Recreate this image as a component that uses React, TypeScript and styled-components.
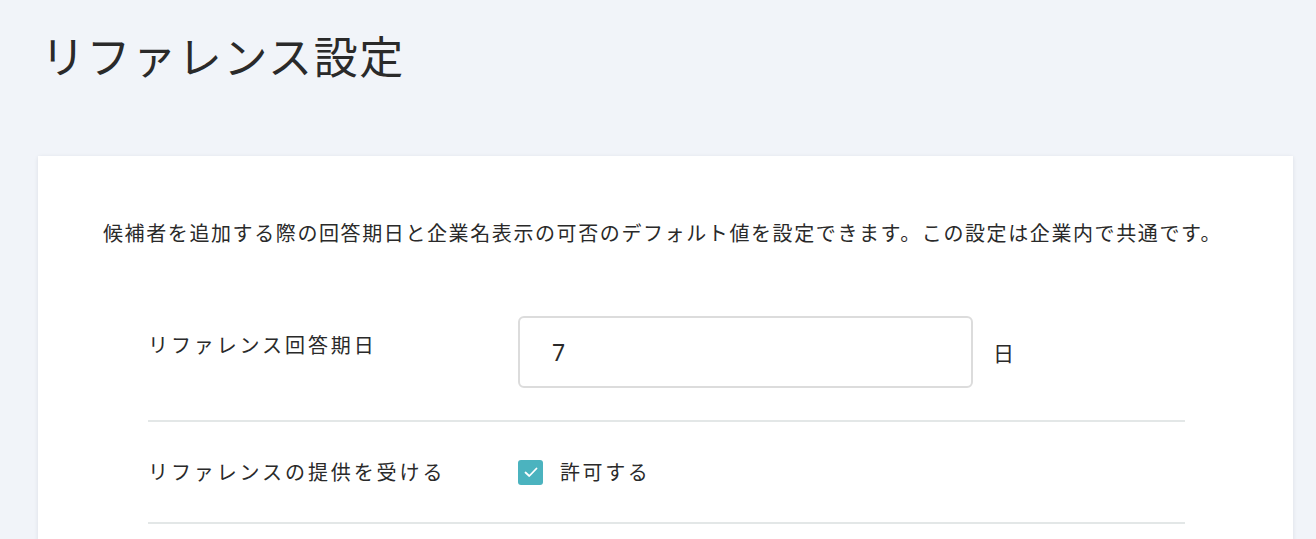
import React from 'react';
import styled, { createGlobalStyle } from 'styled-components';

const GlobalStyle = createGlobalStyle`
  html, body {
    margin: 0;
    padding: 0;
    background: #f1f4f9;
    font-family: "Noto Sans CJK JP", "Noto Sans", sans-serif;
    color: #2a2a2a;
  }
`;

export const Page = styled.div`
  min-height: 539px;
  padding: 24px 23px 0 38px;
  box-sizing: border-box;
`;

export const Title = styled.h1`
  margin: 0 0 70px 0;
  padding-left: 3px;
  font-size: 44px;
  line-height: 62px;
  font-weight: 400;
  letter-spacing: 1.6px;
  color: #2a2a2a;
`;

export const Card = styled.section`
  background: #ffffff;
  box-shadow: 0 1px 4px rgba(30, 40, 60, 0.1);
  padding: 62px 108px 40px 65px;
  min-height: 400px;
  box-sizing: border-box;
`;

export const Description = styled.p`
  margin: 0;
  font-size: 20px;
  line-height: 30px;
  letter-spacing: 1.6px;
  white-space: nowrap;
  color: #2a2a2a;
`;

export const Rows = styled.div`
  margin: 36px 0 0 45px;
`;

export const Row = styled.div<{ $center?: boolean }>`
  display: grid;
  grid-template-columns: 370px 1fr;
  align-items: ${(p) => (p.$center ? 'center' : 'start')};
  padding: 32px 0;
  border-bottom: 2px solid #e3e7e7;
`;

export const Label = styled.div<{ $offset?: number }>`
  padding-top: ${(p) => p.$offset ?? 0}px;
  font-size: 20px;
  line-height: 30px;
  letter-spacing: 2.9px;
  color: #2a2a2a;
`;

export const Field = styled.div`
  display: flex;
  align-items: center;
  gap: 20px;
  min-height: 36px;
`;

export const NumberInput = styled.input`
  width: 455px;
  height: 72px;
  box-sizing: border-box;
  border: 2px solid #dcdcdc;
  border-radius: 6px;
  padding: 0 0 0 32px;
  font-family: "Noto Sans", "Noto Sans CJK JP", sans-serif;
  font-size: 23px;
  color: #2a2a2a;
  outline: none;
  background: #ffffff;
`;

export const Unit = styled.span`
  font-size: 21px;
  color: #2a2a2a;
`;

export const CheckLabel = styled.label`
  display: flex;
  align-items: center;
  gap: 17px;
  font-size: 20px;
  line-height: 30px;
  letter-spacing: 2.6px;
  color: #2a2a2a;
  cursor: pointer;
`;

export const CheckBox = styled.span`
  width: 25px;
  height: 25px;
  flex: none;
  border-radius: 3px;
  background: #4bb3bf;
  display: inline-flex;
  align-items: center;
  justify-content: center;
`;

export default function App() {
  return (
    <>
      <GlobalStyle />
      <Page>
        <Title>リファレンス設定</Title>
        <Card>
          <Description>
            候補者を追加する際の回答期日と企業名表示の可否のデフォルト値を設定できます。この設定は企業内で共通です。
          </Description>
          <Rows>
            <Row>
              <Label $offset={14}>リファレンス回答期日</Label>
              <Field>
                <NumberInput type="text" defaultValue="7" />
                <Unit>日</Unit>
              </Field>
            </Row>
            <Row $center>
              <Label>リファレンスの提供を受ける</Label>
              <Field>
                <CheckLabel>
                  <CheckBox>
                    <svg width="20" height="20" viewBox="0 0 20 20" fill="none">
                      <path
                        d="M4.5 10.5 L8.3 14 L15.5 6.5"
                        stroke="#ffffff"
                        strokeWidth="1.8"
                        strokeLinecap="round"
                        strokeLinejoin="round"
                      />
                    </svg>
                  </CheckBox>
                  許可する
                </CheckLabel>
              </Field>
            </Row>
          </Rows>
        </Card>
      </Page>
    </>
  );
}
